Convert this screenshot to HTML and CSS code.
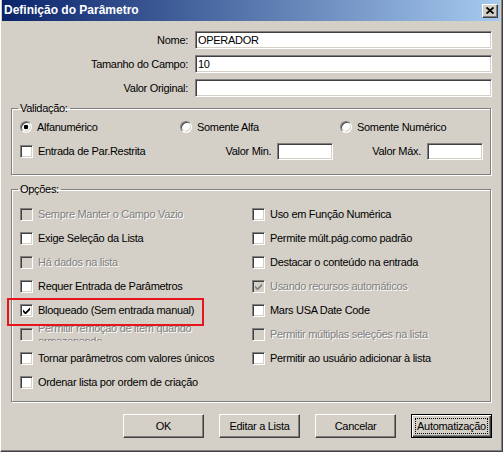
FILE: index.html
```html
<!DOCTYPE html>
<html lang="pt">
<head>
    <meta charset="UTF-8">
    <title>Definição do Parâmetro</title>
    <link rel="stylesheet" href="styles.css">
</head>
<body>
    <div class="window">
        <div class="titlebar">
            <span class="title">Definição do Parâmetro</span>
            <span class="close">
                <svg width="8" height="7" viewBox="0 0 8 7"><path d="M0.5 0.5 L7.5 6.5 M7.5 0.5 L0.5 6.5" stroke="#000" stroke-width="1.9"/></svg>
            </span>
        </div>

        <div class="content">
            <!-- top fields -->
            <div class="fields">
                <label>Nome:</label>
                <div class="edit">OPERADOR</div>
                <label>Tamanho do Campo:</label>
                <div class="edit">10</div>
                <label>Valor Original:</label>
                <div class="edit"></div>
            </div>

            <fieldset class="group validacao">
                <legend>Validação:</legend>
                <div class="radios">
                    <span class="opt"><span class="radio checked"></span>Alfanumérico</span>
                    <span class="opt"><span class="radio"></span>Somente Alfa</span>
                    <span class="opt"><span class="radio"></span>Somente Numérico</span>
                </div>
                <div class="limits">
                    <span class="opt grow"><span class="cb"></span>Entrada de Par.Restrita</span>
                    <span class="lim">Valor Min. <span class="edit small"></span></span>
                    <span class="lim max">Valor Máx. <span class="edit small"></span></span>
                </div>
            </fieldset>

            <fieldset class="group opcoes">
                <legend>Opções:</legend>
                <div class="options">
                    <span class="opt disabled"><span class="cb"></span>Sempre Manter o Campo Vazio</span>
                    <span class="opt"><span class="cb"></span>Uso em Função Numérica</span>

                    <span class="opt"><span class="cb"></span>Exige Seleção da Lista</span>
                    <span class="opt"><span class="cb"></span>Permite múlt.pág.como padrão</span>

                    <span class="opt disabled"><span class="cb"></span>Há dados na lista</span>
                    <span class="opt"><span class="cb"></span>Destacar o conteúdo na entrada</span>

                    <span class="opt"><span class="cb"></span>Requer Entrada de Parâmetros</span>
                    <span class="opt disabled"><span class="cb"><svg width="7" height="7" viewBox="0 0 7 7"><polygon points="0,2.5 2.5,5 7,0.5 7,3 2.5,7.5 0,5" fill="#808080"/></svg></span>Usando recursos automáticos</span>

                    <span class="opt marked"><span class="cb"><svg width="7" height="7" viewBox="0 0 7 7"><polygon points="0,2.5 2.5,5 7,0.5 7,3 2.5,7.5 0,5" fill="#000"/></svg></span>Bloqueado (Sem entrada manual)</span>
                    <span class="opt"><span class="cb"></span>Mars USA Date Code</span>

                    <span class="opt disabled wrap"><span class="cb"></span><span class="txt">Permitir remoção de item quando armazenando</span></span>
                    <span class="opt disabled"><span class="cb"></span>Permitir múltiplas seleções na lista</span>

                    <span class="opt"><span class="cb"></span>Tornar parâmetros com valores únicos</span>
                    <span class="opt"><span class="cb"></span>Permitir ao usuário adicionar à lista</span>

                    <span class="opt"><span class="cb"></span>Ordenar lista por ordem de criação</span>
                </div>
            </fieldset>

            <div class="buttons">
                <span class="btn">OK</span>
                <span class="btn">Editar a Lista</span>
                <span class="btn">Cancelar</span>
                <span class="btn default"><span class="focus">Automatização</span></span>
            </div>
        </div>
    </div>
</body>
</html>
```

FILE: styles.css
```css
* {
    box-sizing: border-box;
}

body {
    margin: 0;
    background-color: #d4d0c8;
    font-family: "Liberation Sans", Arial, sans-serif;
    font-size: 11px;
    letter-spacing: -0.3px;
    line-height: 13px;
    color: #000;
}

/* Window frame */
.window {
    width: 503px;
    height: 452px;
    background-color: #d4d0c8;
    border-left: 1px solid #fff;
    border-right: 1px solid #404040;
    border-bottom: 1px solid #404040;
    box-shadow: inset -1px -1px #808080;
    padding: 0 2px 2px 1px;
}

/* Title bar */
.titlebar {
    height: 21px;
    display: flex;
    align-items: center;
    justify-content: space-between;
    padding: 0 2px 0 2px;
    background: linear-gradient(to right, #0a246a, #a6caf0);
    color: #fff;
    font-weight: bold;
    font-size: 12px;
    letter-spacing: 0;
}

.close {
    width: 16px;
    height: 14px;
    display: flex;
    align-items: center;
    justify-content: center;
    background-color: #d4d0c8;
    border: 1px solid;
    border-color: #fff #404040 #404040 #fff;
    box-shadow: inset -1px -1px #808080;
}

.content {
    padding: 10px 8px 0 9px;
}

/* Top fields */
.fields {
    display: grid;
    grid-template-columns: 177px 297px;
    column-gap: 7px;
    row-gap: 6px;
    align-items: center;
}

.fields label {
    text-align: right;
}

.edit {
    display: block;
    height: 18px;
    background-color: #fff;
    border: 1px solid;
    border-color: #808080 #fff #fff #808080;
    box-shadow: inset 1px 1px #404040, inset -1px -1px #d4d0c8;
    padding: 0 2px;
    line-height: 16px;
}

.edit.small {
    width: 56px;
    height: 17px;
    margin-left: 6px;
}

/* Group boxes */
.group {
    width: 480px;
    margin: 5px 0 0;
    padding: 0 7px 13px 8px;
    border: 1px solid #808080;
    box-shadow: inset 1px 1px #fff, 1px 1px #fff;
}

.group legend {
    padding: 0 2px;
    margin-left: -2px;
    line-height: 13px;
}

.opcoes {
    margin-top: 8px;
    padding-bottom: 7px;
}

.radios {
    display: grid;
    grid-template-columns: 160px 160px 1fr;
    height: 20px;
    margin-top: 2px;
    align-items: center;
}

.limits {
    display: flex;
    align-items: center;
    height: 20px;
    margin-top: 4px;
}

.grow {
    flex: 1;
}

.lim {
    display: flex;
    align-items: center;
}

.lim.max {
    margin-left: 39px;
}

/* Options */
.options {
    display: grid;
    grid-template-columns: 232px 1fr;
    grid-auto-rows: 24px;
    margin-top: 6px;
}

.opt {
    display: flex;
    align-items: center;
    gap: 5px;
    white-space: nowrap;
}

.opt.disabled {
    color: #808080;
    text-shadow: 1px 1px #fff;
}

.opt.disabled .cb {
    background-color: #d4d0c8;
}

.opt.wrap {
    align-items: flex-start;
    white-space: normal;
}

.opt.wrap .cb {
    margin-top: 6px;
}

.opt.wrap .txt {
    width: 160px;
    height: 19px;
    overflow: hidden;
}

.opt.marked {
    position: relative;
}

.opt.marked::after {
    content: "";
    position: absolute;
    left: -13px;
    top: 0;
    width: 193px;
    height: 24px;
    border: 2px solid #e8141b;
}

/* Checkbox and radio */
.cb {
    flex: none;
    width: 13px;
    height: 13px;
    display: flex;
    align-items: center;
    justify-content: center;
    background-color: #fff;
    border: 1px solid;
    border-color: #808080 #fff #fff #808080;
    box-shadow: inset 1px 1px #404040, inset -1px -1px #d4d0c8;
}

.radio {
    flex: none;
    width: 12px;
    height: 12px;
    border-radius: 50%;
    background-color: #fff;
    border: 1px solid;
    border-color: #808080 #fff #fff #808080;
    box-shadow: inset 1px 1px #404040, inset -1px -1px #d4d0c8;
}

.radio.checked {
    background: radial-gradient(circle, #000 2px, #fff 2.6px);
}

/* Buttons */
.buttons {
    display: flex;
    justify-content: flex-end;
    gap: 15px;
    margin-top: 12px;
}

.btn {
    width: 81px;
    height: 24px;
    display: flex;
    align-items: center;
    justify-content: center;
    border: 1px solid;
    border-color: #fff #404040 #404040 #fff;
    box-shadow: inset -1px -1px #808080, inset 1px 1px #d4d0c8;
}

.btn.default {
    border-color: #000;
    box-shadow: inset 1px 1px #fff, inset -1px -1px #404040, inset -2px -2px #808080;
    padding: 3px;
    align-items: stretch;
}

.focus {
    flex: 1;
    display: flex;
    align-items: center;
    justify-content: center;
    border: 1px dotted #000;
}
```
